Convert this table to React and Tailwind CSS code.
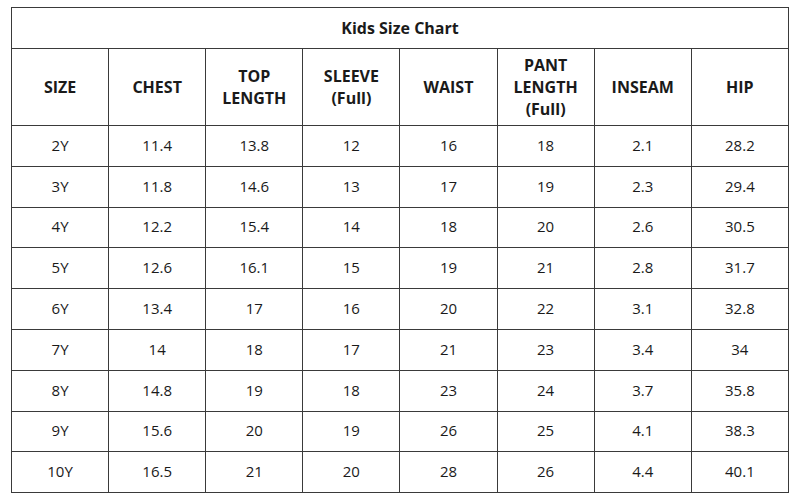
import React from "react";

const headers = [
  ["SIZE"],
  ["CHEST"],
  ["TOP", "LENGTH"],
  ["SLEEVE", "(Full)"],
  ["WAIST"],
  ["PANT", "LENGTH", "(Full)"],
  ["INSEAM"],
  ["HIP"],
];

const rows = [
  ["2Y", "11.4", "13.8", "12", "16", "18", "2.1", "28.2"],
  ["3Y", "11.8", "14.6", "13", "17", "19", "2.3", "29.4"],
  ["4Y", "12.2", "15.4", "14", "18", "20", "2.6", "30.5"],
  ["5Y", "12.6", "16.1", "15", "19", "21", "2.8", "31.7"],
  ["6Y", "13.4", "17", "16", "20", "22", "3.1", "32.8"],
  ["7Y", "14", "18", "17", "21", "23", "3.4", "34"],
  ["8Y", "14.8", "19", "18", "23", "24", "3.7", "35.8"],
  ["9Y", "15.6", "20", "19", "26", "25", "4.1", "38.3"],
  ["10Y", "16.5", "21", "20", "28", "26", "4.4", "40.1"],
];

export default function App() {
  return (
    <div
      className="w-[800px] h-[500px] bg-white pt-[7px] pl-[11px] text-[#1a1a1a]"
      style={{ fontFamily: '"Open Sans", "Liberation Sans", sans-serif' }}
    >
      <table className="w-[778px] table-fixed border-collapse border border-[#3a3a3a]">
        <colgroup>
          {headers.map((_, i) => (
            <col key={i} className="w-[97px]" />
          ))}
        </colgroup>
        <thead>
          <tr className="h-[41px]">
            <th
              colSpan={8}
              className="border border-[#3a3a3a] text-[16px] font-bold leading-none text-center"
            >
              Kids Size Chart
            </th>
          </tr>
          <tr className="h-[77px]">
            {headers.map((h, i) => (
              <th
                key={i}
                className="border border-[#3a3a3a] text-[16px] font-bold leading-[22px] text-center p-0"
              >
                {h.map((l, j) => (
                  <div key={j}>{l}</div>
                ))}
              </th>
            ))}
          </tr>
        </thead>
        <tbody>
          {rows.map((r, i) => (
            <tr key={i} className="h-[40.8px]">
              {r.map((c, j) => (
                <td
                  key={j}
                  className="border border-[#3a3a3a] text-[15px] leading-[20px] text-center p-0 pb-[2px]"
                >
                  {c}
                </td>
              ))}
            </tr>
          ))}
        </tbody>
      </table>
    </div>
  );
}
